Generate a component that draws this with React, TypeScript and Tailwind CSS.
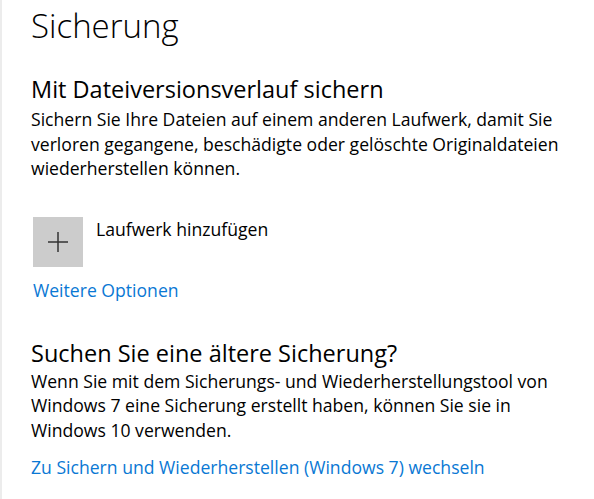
import React from "react";

const Link: React.FC<{ children: React.ReactNode; className?: string }> = ({
  children,
  className = "",
}) => (
  <a href="#" className={`block text-[#0a78d4] text-[17.6px] leading-6 ${className}`}>
    {children}
  </a>
);

const App: React.FC = () => {
  return (
    <div className="min-h-screen bg-white border-l-2 border-[#ececec] pl-[29px] pt-[6px] text-black font-['Open_Sans',sans-serif]">
      <h1 className="text-[33px] leading-10 font-light">Sicherung</h1>

      <section className="mt-[29px]">
        <h2 className="text-[23.5px] leading-7">Mit Dateiversionsverlauf sichern</h2>
        <p className="mt-[4px] text-[17.6px] leading-[24.5px]">
          Sichern Sie Ihre Dateien auf einem anderen Laufwerk, damit Sie
          <br />
          verloren gegangene, beschädigte oder gelöschte Originaldateien
          <br />
          wiederherstellen können.
        </p>

        <div className="mt-[36px] flex items-start gap-[13px] pl-[2px]">
          <button className="w-[50px] h-[50px] bg-[#cccccc] flex items-center justify-center">
            <svg width="22" height="22" viewBox="0 0 22 22">
              <path d="M11 1v20M1 11h20" stroke="#333" strokeWidth="1.5" />
            </svg>
          </button>
          <span className="text-[17.6px] leading-6">Laufwerk hinzufügen</span>
        </div>

        <Link className="mt-[11px] pl-[2px]">Weitere Optionen</Link>
      </section>

      <section className="mt-[37px]">
        <h2 className="text-[23.5px] leading-7">Suchen Sie eine ältere Sicherung?</h2>
        <p className="mt-[2px] text-[17.6px] leading-[24.5px]">
          Wenn Sie mit dem Sicherungs- und Wiederherstellungstool von
          <br />
          Windows 7 eine Sicherung erstellt haben, können Sie sie in
          <br />
          Windows 10 verwenden.
        </p>
        <Link className="mt-[13px]">Zu Sichern und Wiederherstellen (Windows 7) wechseln</Link>
      </section>
    </div>
  );
};

export default App;
